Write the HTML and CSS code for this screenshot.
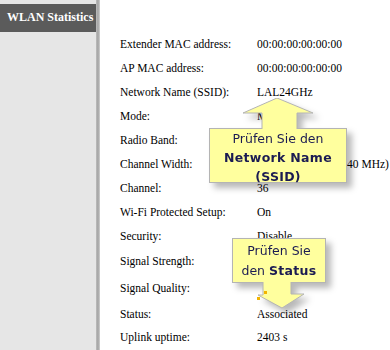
FILE: index.html
```html
<!DOCTYPE html>
<html lang="de">
<head>
    <meta charset="UTF-8">
    <meta name="viewport" content="width=device-width, initial-scale=1.0">
    <title>WLAN Statistics</title>
    <link rel="stylesheet" href="styles.css">
</head>
<body>
<div class="page">
    <aside class="sidebar">
        <h1 class="side-title">WLAN Statistics</h1>
    </aside>

    <main class="content">
        <div class="stats">
            <div class="row"><span class="label">Extender MAC address:</span><span class="value">00:00:00:00:00:00</span></div>
            <div class="row"><span class="label">AP MAC address:</span><span class="value">00:00:00:00:00:00</span></div>
            <div class="row"><span class="label">Network Name (SSID):</span><span class="value">LAL24GHz</span></div>
            <div class="row"><span class="label">Mode:</span><span class="value">Mixed</span></div>
            <div class="row"><span class="label">Radio Band:</span><span class="value">5 GHz</span></div>
            <div class="row"><span class="label">Channel Width:</span><span class="value">Auto (20 MHz and 40 MHz)</span></div>
            <div class="row"><span class="label">Channel:</span><span class="value">36</span></div>
            <div class="row"><span class="label">Wi-Fi Protected Setup:</span><span class="value">On</span></div>
            <div class="row"><span class="label">Security:</span><span class="value">Disable</span></div>
            <div class="row tall"><span class="label">Signal Strength:</span><span class="value"></span></div>
            <div class="row taller"><span class="label">Signal Quality:</span><span class="value"></span></div>
            <div class="row"><span class="label">Status:</span><span class="value">Associated</span></div>
            <div class="row short"><span class="label">Uplink uptime:</span><span class="value">2403 s</span></div>
        </div>

        <!-- tooltip pointing up at the SSID -->
        <div class="callout callout-ssid">
            <svg class="arrow arrow-up" width="138" height="31" viewBox="0 0 138 31">
                <path d="M53 31 L53 15 L34 15 L68 0 L104 15 L88 15 L88 31" />
            </svg>
            <div class="bubble">Prüfen Sie den<br><b>Network Name<br>(SSID)</b></div>
        </div>

        <!-- tooltip pointing down at the status -->
        <div class="callout callout-status">
            <div class="bubble">Prüfen Sie<br>den <b>Status</b></div>
            <svg class="arrow arrow-down" width="94" height="27" viewBox="0 0 94 27">
                <path d="M31 0 L31 13 L26 13 L50 26 L72 12 L59 12 L59 0" />
            </svg>
        </div>
        <span class="dot dot-a"></span>
        <span class="dot dot-b"></span>
    </main>
</div>
</body>
</html>
```

FILE: styles.css
```css
html, body {
    margin: 0;
    height: 350px;
    overflow: hidden;
    background: #fff;
}
.page {
    display: flex;
    height: 350px;
}
.sidebar {
    width: 100px;
    flex-shrink: 0;
    background: linear-gradient(to right, #e6e6e6 96px, #bdbdbd 96px, #a3a3a3 98px, #d2d2d2 100px);
    padding-top: 4px;
    box-sizing: border-box;
}
.side-title {
    margin: 0;
    width: 96px;
    height: 28px;
    line-height: 27px;
    background: #5b5b5b;
    color: #fff;
    font-family: "Liberation Serif", "DejaVu Serif", serif;
    font-size: 12px;
    font-weight: 700;
    padding-left: 7px;
    box-sizing: border-box;
    white-space: nowrap;
}
.content {
    position: relative;
    flex: 1;
    padding: 32px 0 0 20px;
}
.stats {
    font-family: "Liberation Serif", serif;
    font-size: 11.5px;
    color: #000;
}
.row {
    display: grid;
    grid-template-columns: 137px 1fr;
    height: 24px;
    line-height: 24px;
    white-space: nowrap;
}
.row.tall {
    height: 26px;
    line-height: 26px;
}
.row.taller {
    height: 28px;
    line-height: 28px;
}
.row.short {
    height: 22px;
    line-height: 22px;
}
.callout {
    position: absolute;
    display: flex;
    flex-direction: column;
    filter: drop-shadow(5px 5px 3px rgba(0, 0, 0, 0.28));
}
.callout-ssid {
    left: 109px;
    top: 98px;
    width: 138px;
}
.callout-status {
    left: 132px;
    top: 238px;
    width: 94px;
}
.arrow {
    display: block;
    position: relative;
    z-index: 1;
}
.arrow-up {
    margin-bottom: -1px;
}
.arrow-down {
    margin-top: -1px;
}
.arrow path {
    fill: #ffff9e;
    stroke: #b4b4b4;
    stroke-width: 1;
}
.bubble {
    background: #ffff9e;
    border: 1px solid #b4b4b4;
    box-sizing: border-box;
    text-align: center;
    font-family: "DejaVu Sans", Verdana, sans-serif;
    font-size: 12.5px;
    color: #1b1b52;
}
.bubble b {
    font-weight: bold;
    letter-spacing: 0.3px;
}
.callout-ssid .bubble {
    height: 55px;
    line-height: 19px;
    padding-top: 0;
}
.callout-status .bubble {
    height: 45px;
    line-height: 20px;
    padding-top: 2px;
}
.dot {
    position: absolute;
    width: 3px;
    height: 3px;
    background: #f2b400;
}
.dot-a {
    left: 164px;
    top: 291px;
}
.dot-b {
    left: 157px;
    top: 297px;
}
```
